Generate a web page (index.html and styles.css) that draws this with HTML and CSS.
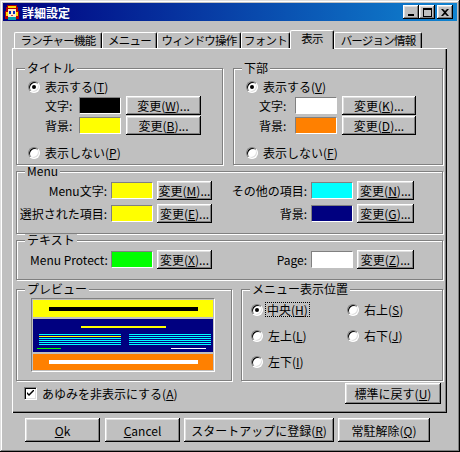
FILE: index.html
```html
<!DOCTYPE html>
<html lang="ja">

<head>
    <meta charset="UTF-8">
    <title>詳細設定</title>
    <link rel="stylesheet" href="styles.css">
</head>

<body>

    <div class="window">
        <div class="titlebar">
            <svg class="app-icon" viewBox="0 0 16 16" width="16" height="16">
                <path d="M3 1h10v2h1v4h1v8h-3V8H4v7H1V7h1V3h1z" fill="#b00000" />
                <rect x="4" y="2" width="8" height="2" fill="#ffd800" />
                <rect x="4" y="5" width="8" height="8" fill="#ffe8c8" />
                <rect x="5" y="7" width="2" height="3" fill="#0030c0" />
                <rect x="9" y="7" width="2" height="3" fill="#0030c0" />
                <rect x="7" y="11" width="2" height="1" fill="#d04040" />
                <rect x="4" y="13" width="8" height="3" fill="#00a0b0" />
                <rect x="2" y="8" width="2" height="4" fill="#ffd800" />
                <rect x="12" y="8" width="2" height="4" fill="#ffd800" />
            </svg>
            <span class="title">詳細設定</span>
            <div class="caption-buttons">
                <button class="cap">
                    <svg width="8" height="7" viewBox="0 0 8 7"><rect x="1" y="5" width="6" height="2" fill="#000" /></svg>
                </button>
                <button class="cap">
                    <svg width="9" height="9" viewBox="0 0 9 9"><path d="M0 0h9v9H0z M1 2v6h7V2z" fill="#000" fill-rule="evenodd" /></svg>
                </button>
                <button class="cap close">
                    <svg width="8" height="7" viewBox="0 0 8 7"><path d="M0 0h2l2 2 2-2h2L5 3.5 8 7H6L4 5 2 7H0l3-3.5z" fill="#000" /></svg>
                </button>
            </div>
        </div>

        <div class="tabs">
            <div class="tab tab-launcher">ランチャー機能</div>
            <div class="tab tab-menu">メニュー</div>
            <div class="tab tab-window">ウィンドウ操作</div>
            <div class="tab tab-font">フォント</div>
            <div class="tab tab-view active">表示</div>
            <div class="tab tab-version">バージョン情報</div>
        </div>

        <div class="panel">
            <div class="row row-top">
                <fieldset class="group g-title">
                    <legend>タイトル</legend>
                    <div class="group-body body-title">
                        <div class="radio"><span class="radio-dot on"></span><span>表示する(<u>T</u>)</span></div>
                        <div class="color-row first">
                            <span class="lbl">文字:</span>
                            <span class="swatch sw-black"></span>
                            <button class="btn btn-change">変更(<u>W</u>)...</button>
                        </div>
                        <div class="color-row">
                            <span class="lbl">背景:</span>
                            <span class="swatch sw-yellow"></span>
                            <button class="btn btn-change">変更(<u>B</u>)...</button>
                        </div>
                        <div class="radio last"><span class="radio-dot"></span><span>表示しない(<u>P</u>)</span></div>
                    </div>
                </fieldset>

                <fieldset class="group g-lower">
                    <legend>下部</legend>
                    <div class="group-body body-lower">
                        <div class="radio"><span class="radio-dot on"></span><span>表示する(<u>V</u>)</span></div>
                        <div class="color-row first">
                            <span class="lbl">文字:</span>
                            <span class="swatch sw-white"></span>
                            <button class="btn btn-change">変更(<u>K</u>)...</button>
                        </div>
                        <div class="color-row">
                            <span class="lbl">背景:</span>
                            <span class="swatch sw-orange"></span>
                            <button class="btn btn-change">変更(<u>D</u>)...</button>
                        </div>
                        <div class="radio last"><span class="radio-dot"></span><span>表示しない(<u>F</u>)</span></div>
                    </div>
                </fieldset>
            </div>

            <fieldset class="group g-menu">
                <legend>Menu</legend>
                <div class="color-grid">
                    <span class="lbl">Menu文字:</span>
                    <span class="swatch sw-yellow"></span>
                    <button class="btn">変更(<u>M</u>)...</button>
                    <span class="lbl">その他の項目:</span>
                    <span class="swatch sw-cyan"></span>
                    <button class="btn">変更(<u>N</u>)...</button>

                    <span class="lbl">選択された項目:</span>
                    <span class="swatch sw-yellow"></span>
                    <button class="btn">変更(<u>E</u>)...</button>
                    <span class="lbl">背景:</span>
                    <span class="swatch sw-navy"></span>
                    <button class="btn">変更(<u>G</u>)...</button>
                </div>
            </fieldset>

            <fieldset class="group g-text">
                <legend>テキスト</legend>
                <div class="color-grid">
                    <span class="lbl lbl-left">Menu Protect:</span>
                    <span class="swatch sw-green"></span>
                    <button class="btn">変更(<u>X</u>)...</button>
                    <span class="lbl">Page:</span>
                    <span class="swatch sw-white"></span>
                    <button class="btn">変更(<u>Z</u>)...</button>
                </div>
            </fieldset>

            <div class="row row-bottom">
                <fieldset class="group g-preview">
                    <legend>プレビュー</legend>
                    <div class="preview">
                        <div class="pv-title">
                            <div class="pv-bar pv-black"></div>
                        </div>
                        <div class="pv-menu">
                            <div class="pv-head"></div>
                            <div class="pv-cols">
                                <div class="pv-col">
                                    <div class="pv-line"></div>
                                    <div class="pv-line sel"></div>
                                    <div class="pv-line"></div>
                                    <div class="pv-line"></div>
                                    <div class="pv-line"></div>
                                    <div class="pv-line"></div>
                                </div>
                                <div class="pv-col">
                                    <div class="pv-line"></div>
                                    <div class="pv-line"></div>
                                    <div class="pv-line"></div>
                                    <div class="pv-line"></div>
                                    <div class="pv-line"></div>
                                    <div class="pv-line"></div>
                                </div>
                            </div>
                            <div class="pv-foot">
                                <span class="pv-protect"></span>
                                <span class="pv-page"></span>
                            </div>
                        </div>
                        <div class="pv-lower">
                            <div class="pv-bar pv-white"></div>
                        </div>
                    </div>
                </fieldset>

                <fieldset class="group g-position">
                    <legend>メニュー表示位置</legend>
                    <div class="pos-grid">
                        <div class="radio"><span class="radio-dot on"></span><span class="focus">中央(<u>H</u>)</span></div>
                        <div class="radio"><span class="radio-dot"></span><span>右上(<u>S</u>)</span></div>
                        <div class="radio"><span class="radio-dot"></span><span>左上(<u>L</u>)</span></div>
                        <div class="radio"><span class="radio-dot"></span><span>右下(<u>J</u>)</span></div>
                        <div class="radio"><span class="radio-dot"></span><span>左下(<u>I</u>)</span></div>
                    </div>
                </fieldset>
            </div>

            <div class="row row-foot">
                <span class="check">
                    <svg width="7" height="7" viewBox="0 0 7 7"><path d="M0 2l2 2 5-5v2L2 6 0 4z" fill="#000" /></svg>
                </span>
                <span>あゆみを非表示にする(<u>A</u>)</span>
                <button class="btn btn-reset">標準に戻す(<u>U</u>)</button>
            </div>
        </div>

        <div class="buttons">
            <button class="btn btn-ok"><u>O</u>k</button>
            <button class="btn btn-cancel"><u>C</u>ancel</button>
            <button class="btn btn-startup">スタートアップに登録(<u>R</u>)</button>
            <button class="btn btn-resident">常駐解除(<u>Q</u>)</button>
        </div>
    </div>

</body>

</html>
```

FILE: styles.css
```css
* {
    box-sizing: border-box;
}

body {
    margin: 0;
    background-color: #c0c0c0;
    font-family: "Noto Sans CJK JP", "Liberation Sans", sans-serif;
    font-size: 12px;
    line-height: 13px;
    color: #000;
    text-autospace: no-autospace;
}

u {
    text-decoration: underline;
    text-underline-offset: 1px;
}

.window {
    width: 460px;
    height: 452px;
    padding: 3px;
    background-color: #c0c0c0;
    box-shadow: inset -1px -1px #000, inset 1px 1px #dfdfdf, inset -2px -2px #808080, inset 2px 2px #fff;
}

/* title bar */
.titlebar {
    height: 18px;
    display: flex;
    align-items: center;
    padding: 0 4px 0 1px;
    background: linear-gradient(to right, #000080, #1084d0);
    color: #fff;
}

.app-icon {
    flex: none;
    margin-right: 2px;
}

.title {
    font-weight: bold;
}

.caption-buttons {
    margin-left: auto;
    display: flex;
}

.cap {
    width: 16px;
    height: 14px;
    padding: 0;
    border: 0;
    background-color: #c0c0c0;
    box-shadow: inset -1px -1px #000, inset 1px 1px #fff, inset -2px -2px #808080, inset 2px 2px #dfdfdf;
    display: flex;
    align-items: center;
    justify-content: center;
}

.cap.close {
    margin-left: 2px;
}

/* tabs */
.tabs {
    display: flex;
    align-items: flex-end;
    height: 18px;
    margin: 9px 0 0 9px;
    padding-left: 2px;
}

.tab {
    height: 16px;
    background-color: #c0c0c0;
    border-top: 1px solid #fff;
    border-left: 1px solid #fff;
    border-right: 1px solid #000;
    border-radius: 2px 2px 0 0;
    box-shadow: inset -1px 0 #808080;
    display: flex;
    justify-content: center;
    font-size: 11.5px;
    line-height: 14px;
    letter-spacing: -0.8px;
    white-space: nowrap;
}

.tab.active {
    height: 19px;
    margin-bottom: -1px;
    position: relative;
    z-index: 1;
}

.tab-launcher { width: 88px; }
.tab-menu { width: 55px; }
.tab-window { width: 84px; }
.tab-font { width: 49px; }
.tab-view { width: 44px; }
.tab-version { width: 88px; }

/* panel */
.panel {
    width: 435px;
    height: 365px;
    margin-left: 9px;
    padding: 14px 4px 0 4px;
    box-shadow: inset 1px 1px #fff, inset -1px -1px #000, inset -2px -2px #808080;
}

.row {
    display: flex;
}

.row-top {
    gap: 10px;
}

fieldset.group {
    margin: 0;
    padding: 0;
    min-width: 0;
    border: 1px solid #808080;
    box-shadow: inset 1px 1px #fff, 1px 1px #fff;
}

.group legend {
    margin-left: 8px;
    padding: 0 2px;
    line-height: 12px;
    background-color: #c0c0c0;
}

.g-title { width: 207px; height: 103px; }
.g-lower { width: 210px; height: 103px; }
.g-menu { width: 427px; height: 69px; margin-top: 2px; }
.g-text { width: 427px; height: 46px; margin-top: 5px; }

.row-bottom {
    gap: 9px;
    margin-top: 3px;
}

.g-preview { width: 216px; height: 98px; }
.g-position { width: 202px; height: 98px; }

/* radios and colour rows */
.radio {
    display: flex;
    align-items: center;
    height: 13px;
    gap: 5px;
    white-space: nowrap;
}

.radio-dot {
    flex: none;
    width: 12px;
    height: 12px;
    border-radius: 50%;
    background-color: #fff;
    border: 1px solid;
    border-color: #808080 #fff #fff #808080;
    box-shadow: inset 1px 1px #000, inset -1px -1px #dfdfdf;
    display: flex;
    align-items: center;
    justify-content: center;
}

.radio-dot.on::after {
    content: "";
    width: 4px;
    height: 4px;
    border-radius: 50%;
    background-color: #000;
}

.group-body {
    padding-top: 6px;
}

.body-title {
    padding-left: 11px;
}

.body-lower {
    padding-left: 12px;
}

.color-row {
    display: flex;
    align-items: center;
    height: 19px;
    margin-top: 1px;
    padding-left: 17px;
}

.color-row.first {
    margin-top: 3px;
}

.body-lower .color-row {
    padding-left: 13px;
}

.color-row .lbl {
    width: 34px;
    white-space: nowrap;
}

.body-lower .color-row .lbl {
    width: 36px;
}

.radio.last {
    margin-top: 11px;
}

.swatch {
    width: 42px;
    height: 17px;
    border: 1px solid;
    border-color: #808080 #fff #fff #808080;
}

.sw-black { background-color: #000; }
.sw-yellow { background-color: #ff0; }
.sw-white { background-color: #fff; }
.sw-orange { background-color: #ff8000; }
.sw-cyan { background-color: #0ff; }
.sw-navy { background-color: #000080; }
.sw-green { background-color: #0f0; }

.btn {
    font: inherit;
    line-height: 13px;
    color: #000;
    height: 19px;
    padding: 0;
    border: 0;
    background-color: #c0c0c0;
    box-shadow: inset -1px -1px #000, inset 1px 1px #fff, inset -2px -2px #808080, inset 2px 2px #dfdfdf;
    white-space: nowrap;
}

.btn-change {
    width: 75px;
    margin-left: 5px;
}

.body-lower .btn-change {
    width: 74px;
}

.color-grid {
    display: grid;
    grid-template-columns: 89px 42px 55px 91px 42px 57px;
    column-gap: 4px;
    row-gap: 4px;
    align-items: center;
    padding: 4px 0 0 1px;
}

.color-grid .lbl {
    text-align: right;
    white-space: nowrap;
}

.color-grid .lbl-left {
    text-align: left;
    padding-left: 12px;
}

.color-grid .btn {
    width: 100%;
}

/* preview */
.preview {
    width: 184px;
    margin: 3px 0 0 14px;
    padding: 1px;
    border: 1px solid;
    border-color: #808080 #fff #fff #808080;
    display: flex;
    flex-direction: column;
    gap: 2px;
}

.pv-title {
    height: 17px;
    padding: 7px 0 0 16px;
    background-color: #ff0;
}

.pv-bar {
    width: 149px;
    height: 4px;
}

.pv-black { background-color: #000; }
.pv-white { background-color: #fff; }

.pv-menu {
    height: 33px;
    padding-top: 7px;
    background-color: #000080;
}

.pv-head {
    width: 85px;
    height: 2px;
    margin-left: 48px;
    background-color: #ff0;
}

.pv-cols {
    display: flex;
    gap: 8px;
    margin: 6px 0 0 6px;
}

.pv-col {
    width: 82px;
    display: flex;
    flex-direction: column;
    gap: 1px;
}

.pv-line {
    height: 1px;
    background-color: #0ff;
}

.pv-line.sel {
    background-color: #ff0;
}

.pv-foot {
    display: flex;
    justify-content: space-between;
    margin: 3px 7px 0 4px;
}

.pv-protect {
    width: 24px;
    height: 1px;
    background-color: #0f0;
}

.pv-page {
    width: 35px;
    height: 1px;
    background-color: #fff;
}

.pv-lower {
    height: 16px;
    padding: 6px 0 0 16px;
    background-color: #ff8000;
}

/* menu position */
.pos-grid {
    display: grid;
    grid-template-columns: 96px 96px;
    row-gap: 13px;
    padding: 8px 0 0 9px;
}

.focus {
    outline: 1px dotted #000;
    outline-offset: 0;
    padding: 0 1px;
    margin-left: -2px;
}

/* footer of the panel */
.row-foot {
    height: 21px;
    margin-top: 2px;
    padding-left: 8px;
    align-items: center;
    gap: 5px;
}

.check {
    flex: none;
    width: 13px;
    height: 13px;
    background-color: #fff;
    border: 1px solid;
    border-color: #808080 #fff #fff #808080;
    box-shadow: inset 1px 1px #000, inset -1px -1px #dfdfdf;
    display: flex;
    align-items: center;
    justify-content: center;
}

.btn-reset {
    width: 96px;
    height: 21px;
    margin-left: auto;
    margin-right: 2px;
}

/* dialog buttons */
.buttons {
    display: flex;
    gap: 4px;
    margin-top: 5px;
    padding-left: 22px;
}

.buttons .btn {
    height: 24px;
}

.btn-ok { width: 75px; margin-right: 1px; }
.btn-cancel { width: 75px; }
.btn-startup { width: 150px; }
.btn-resident { width: 92px; }
```
